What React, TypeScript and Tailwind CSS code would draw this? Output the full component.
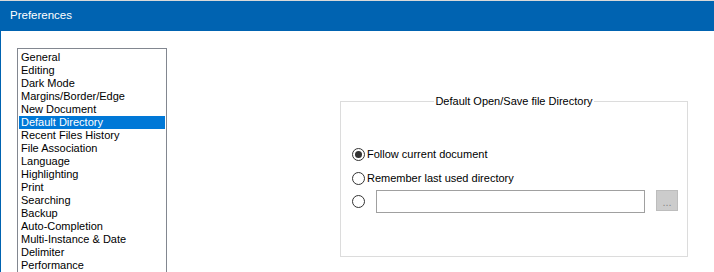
const items = [
  "General",
  "Editing",
  "Dark Mode",
  "Margins/Border/Edge",
  "New Document",
  "Default Directory",
  "Recent Files History",
  "File Association",
  "Language",
  "Highlighting",
  "Print",
  "Searching",
  "Backup",
  "Auto-Completion",
  "Multi-Instance & Date",
  "Delimiter",
  "Performance",
];

function Radio({ checked }: { checked?: boolean }) {
  return (
    <span className="w-[13px] h-[13px] rounded-full border border-[#333] bg-white flex items-center justify-center shrink-0">
      {checked && <span className="w-[7px] h-[7px] rounded-full bg-[#333]" />}
    </span>
  );
}

export default function App() {
  return (
    <div
      className="w-[714px] h-[272px] overflow-hidden bg-white border-t border-[#d9d9d9] flex flex-col text-[11px] text-black"
      style={{ fontFamily: '"Liberation Sans", Arial, sans-serif' }}
    >
      <div className="h-[30px] shrink-0 bg-[#0063b1] text-white text-[11.5px] pl-[10px] flex items-center">
        Preferences
      </div>
      <div className="flex-1 flex border-l border-[#0063b1] min-h-0">
        {/* category list */}
        <div className="ml-[16px] mt-[17px] w-[150px] border border-[#828790] border-b-0 pt-[2px] px-[1px] self-start h-[260px]">
          {items.map((it) => (
            <div
              key={it}
              className={
                "h-[13px] leading-[13px] pl-[2px] whitespace-nowrap " +
                (it === "Default Directory" ? "bg-[#0078d7] text-white" : "")
              }
            >
              {it}
            </div>
          ))}
        </div>

        {/* group box */}
        <div className="ml-[173px] mt-[70px] w-[348px] h-[156px] border border-[#dcdcdc] relative">
          <div className="absolute -top-[8px] left-0 right-0 flex justify-center">
            <span className="bg-white px-[1px] leading-[14px]">Default Open/Save file Directory</span>
          </div>
          <div className="pl-[11px] pt-[45px] flex flex-col">
            <label className="flex items-center gap-[2px] h-[14px]">
              <Radio checked />
              <span>Follow current document</span>
            </label>
            <label className="flex items-center gap-[2px] h-[14px] mt-[10px]">
              <Radio />
              <span>Remember last used directory</span>
            </label>
            <div className="flex items-center mt-[5px]">
              <Radio />
              <div className="ml-[11px] w-[269px] h-[23px] border border-[#a0a0a0] bg-white" />
              <div className="ml-[11px] -mt-[3px] w-[22px] h-[21px] border border-[#bdbdbd] bg-[#cccccc] flex items-center justify-center text-[#8a8a8a] text-[11px] leading-none pt-[4px]">
                ...
              </div>
            </div>
          </div>
        </div>
      </div>
    </div>
  );
}
